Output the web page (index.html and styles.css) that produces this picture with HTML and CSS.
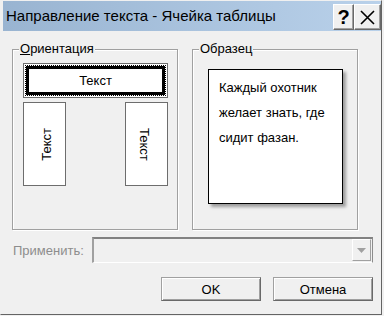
FILE: index.html
```html
<!DOCTYPE html>
<html lang="ru">
<head>
    <meta charset="UTF-8">
    <title>Направление текста - Ячейка таблицы</title>
    <link rel="stylesheet" href="styles.css">
</head>
<body>
    <div class="dialog-window">
        <div class="titlebar">
            <span class="title">Направление текста - Ячейка таблицы</span>
            <div class="title-buttons">
                <div class="title-button help-button">?</div>
                <div class="title-button close-button">
                    <svg width="15" height="15" viewBox="0 0 15 15">
                        <path d="M1 1 L14 14 M14 1 L1 14" stroke="#000" stroke-width="1.6" fill="none"/>
                    </svg>
                </div>
            </div>
        </div>
        <div class="content">
            <div class="groups">
                <div class="group group-orientation">
                    <span class="group-label"><u>О</u>риентация</span>
                    <div class="orient-horizontal">
                        <div class="focus-ring">
                            <div class="selected-box">Текст</div>
                        </div>
                    </div>
                    <div class="orient-vertical-row">
                        <div class="orient-vertical orient-up">
                            <span class="vtext vtext-up">Текст</span>
                        </div>
                        <div class="orient-vertical orient-down">
                            <span class="vtext">Текст</span>
                        </div>
                    </div>
                </div>
                <div class="group group-sample">
                    <span class="group-label">Образец</span>
                    <div class="sample-box">
                        Каждый охотник<br>
                        желает знать, где<br>
                        сидит фазан.
                    </div>
                </div>
            </div>
            <div class="apply-row">
                <div class="apply-label">Применить:</div>
                <div class="combo">
                    <div class="combo-arrow">
                        <svg width="9" height="5" viewBox="0 0 9 5">
                            <path d="M0 0 L9 0 L4.5 5 Z" fill="#a0a0a0"/>
                        </svg>
                    </div>
                </div>
            </div>
            <div class="dialog-buttons">
                <div class="push-button">OK</div>
                <div class="push-button">Отмена</div>
            </div>
        </div>
    </div>
</body>
</html>
```

FILE: styles.css
```css
* {
    margin: 0;
    padding: 0;
    box-sizing: border-box;
}

body {
    background-color: #f0f0f0;
    font-family: 'Liberation Sans', Arial, sans-serif;
    font-size: 13px;
    color: #000;
    overflow: hidden;
}

.dialog-window {
    width: 382px;
    height: 315px;
    background-color: #f0f0f0;
    border: 1px solid;
    border-color: #f0f0f0 #646464 #646464 #f0f0f0;
    display: flex;
    flex-direction: column;
}

.titlebar {
    height: 30px;
    margin: 0 0 0 2px;
    background: linear-gradient(to right, #99b4d1, #b9d1ea);
    display: flex;
    justify-content: space-between;
    align-items: flex-start;
}

.title {
    font-size: 15px;
    line-height: 30px;
    padding-left: 3px;
    white-space: nowrap;
}

.title-buttons {
    display: flex;
    margin-top: 3px;
}

.title-button {
    height: 26px;
    background-color: #f0f0f0;
    border: 1px solid;
    border-color: #fff #696969 #696969 #fff;
    box-shadow: inset -1px -1px 0 #a0a0a0;
    display: flex;
    align-items: center;
    justify-content: center;
}

.help-button {
    width: 21px;
    font-size: 20px;
    font-weight: bold;
}

.close-button {
    width: 27px;
}

.content {
    flex: 1;
    padding: 18px 8px 0 11px;
    display: flex;
    flex-direction: column;
}

.groups {
    display: flex;
    gap: 14px;
}

.group {
    position: relative;
    width: 166px;
    height: 181px;
    border: 1px solid #a0a0a0;
    box-shadow: inset 1px 1px 0 #fff, 1px 1px 0 #fff;
}

.group-label {
    position: absolute;
    top: -9px;
    left: 6px;
    padding: 0 1px;
    background-color: #f0f0f0;
    line-height: 16px;
    white-space: nowrap;
}

.group-orientation {
    padding: 13px 9px 0 10px;
}

.orient-horizontal {
    width: 145px;
    height: 35px;
    border: 1px solid #6d6d6d;
    background-color: #fff;
    padding: 1px;
}

.focus-ring {
    height: 100%;
    border: 1px dotted #000;
}

.selected-box {
    height: 100%;
    border: 3px solid #000;
    display: flex;
    align-items: center;
    justify-content: center;
}

.orient-vertical-row {
    display: flex;
    justify-content: space-between;
    margin-top: 4px;
    width: 145px;
}

.orient-vertical {
    width: 43px;
    height: 84px;
    border: 1px solid #6d6d6d;
    background-color: #fff;
    display: flex;
    align-items: center;
    justify-content: center;
}

.orient-up {
    padding-left: 4px;
}

.orient-down {
    padding-right: 5px;
}

.vtext {
    writing-mode: vertical-rl;
}

.vtext-up {
    transform: rotate(180deg);
}

.group-sample {
    padding: 19px 0 0 15px;
}

.sample-box {
    width: 135px;
    height: 135px;
    background-color: #fff;
    border: 1px solid #000;
    box-shadow: 3px 3px 3px rgba(0, 0, 0, 0.35);
    padding: 5px 0 0 10px;
    line-height: 25px;
    white-space: nowrap;
}

.apply-row {
    display: flex;
    align-items: center;
    margin-top: 7px;
}

.apply-label {
    width: 80px;
    color: #8d8d8d;
    padding-left: 1px;
}

.combo {
    width: 281px;
    height: 26px;
    border-style: solid;
    border-width: 2px 1px 1px 2px;
    border-color: #828282 #8c8c8c #ffffff #a0a0a0;
    background-color: #f0f0f0;
    display: flex;
    justify-content: flex-end;
    padding: 0 1px 1px 0;
}

.combo-arrow {
    width: 19px;
    height: 100%;
    border: 1px solid;
    border-color: #fff #a0a0a0 #a0a0a0 #fff;
    display: flex;
    align-items: center;
    justify-content: center;
}

.dialog-buttons {
    display: flex;
    justify-content: flex-end;
    gap: 12px;
    margin-top: 14px;
}

.push-button {
    width: 100px;
    height: 24px;
    background-color: #f0f0f0;
    border: 1px solid;
    border-color: #a0a0a0 #696969 #696969 #a0a0a0;
    box-shadow: inset 1px 1px 0 #fff, inset -1px -1px 0 #a0a0a0;
    display: flex;
    align-items: center;
    justify-content: center;
}
```
